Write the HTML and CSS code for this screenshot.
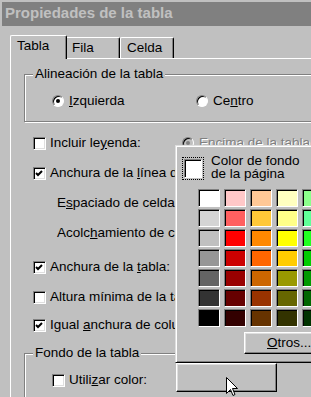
FILE: index.html
```html
<!DOCTYPE html>
<html lang="es">
  <head>
    <meta charset="UTF-8" />
    <title>Propiedades de la tabla</title>
    <link rel="stylesheet" href="styles.css">
  </head>
  <body>
    <div class="window">
      <div class="titlebar">Propiedades de la tabla</div>

      <div class="tabs">
        <div class="tab active">Tabla</div>
        <div class="tab fila">Fila</div>
        <div class="tab celda">Celda</div>
      </div>

      <div class="panel">
        <fieldset class="group">
          <legend>Alineación de la tabla</legend>
          <div class="group-body radios">
            <label class="radio first"><span class="dot on"></span><span><u>I</u>zquierda</span></label>
            <label class="radio"><span class="dot"></span><span>Ce<u>n</u>tro</span></label>
          </div>
        </fieldset>

        <div class="row first-row">
          <label class="check wide"><span class="box"></span><span>Incluir le<u>y</u>enda:</span></label>
          <label class="radio disabled"><span class="dot on"></span><span>Encima de la tabla</span></label>
        </div>
        <div class="row clip">
          <label class="check"><span class="box"><svg viewBox="0 0 11 11"><polyline points="2,5 4,7 8,3" /></svg></span><span>Anchura de la <u>l</u>ínea de borde:</span></label>
        </div>
        <div class="row clip indent"><span>E<u>s</u>paciado de celdas:</span></div>
        <div class="row clip indent"><span>Acolc<u>h</u>amiento de celdas:</span></div>
        <div class="row clip loose">
          <label class="check"><span class="box"><svg viewBox="0 0 11 11"><polyline points="2,5 4,7 8,3" /></svg></span><span>Anchura de la <u>t</u>abla:</span></label>
        </div>
        <div class="row clip">
          <label class="check"><span class="box"></span><span>Altura mínima de la tabla:</span></label>
        </div>
        <div class="row clip tight">
          <label class="check"><span class="box"><svg viewBox="0 0 11 11"><polyline points="2,5 4,7 8,3" /></svg></span><span>Igual <u>a</u>nchura de columnas</span></label>
        </div>

        <fieldset class="group fondo">
          <legend>Fondo de la tabla</legend>
          <div class="group-body color-row">
            <label class="check color-check"><span class="box"></span><span>Utili<u>z</u>ar color:</span></label>
            <div class="dropdown"></div>
          </div>
        </fieldset>
      </div>

      <!-- color picker dropped down over the dialog -->
      <div class="popup">
        <div class="current">
          <span class="focus"><span class="swatch"></span></span>
          <span class="current-label">Color de fondo<br>de la página</span>
        </div>
        <div class="palette">
          <span style="background:#ffffff"></span><span style="background:#ffc8c8"></span><span style="background:#ffc896"></span><span style="background:#ffffc0"></span><span style="background:#8cff8c"></span><span style="background:#c0ffff"></span><span style="background:#c0c0ff"></span><span style="background:#ffc0ff"></span>
          <span style="background:#d4d4d4"></span><span style="background:#ff6060"></span><span style="background:#ffc838"></span><span style="background:#ffff88"></span><span style="background:#60ff98"></span><span style="background:#60ffff"></span><span style="background:#6060ff"></span><span style="background:#ff60ff"></span>
          <span style="background:#c0c0c0"></span><span style="background:#ff0000"></span><span style="background:#ff8800"></span><span style="background:#ffff00"></span><span style="background:#20ff20"></span><span style="background:#00ffff"></span><span style="background:#0000ff"></span><span style="background:#ff00ff"></span>
          <span style="background:#969696"></span><span style="background:#cc0000"></span><span style="background:#ff6600"></span><span style="background:#ffcc00"></span><span style="background:#00cc00"></span><span style="background:#00cccc"></span><span style="background:#0000cc"></span><span style="background:#cc00cc"></span>
          <span style="background:#646464"></span><span style="background:#990000"></span><span style="background:#cc6600"></span><span style="background:#999900"></span><span style="background:#009900"></span><span style="background:#009999"></span><span style="background:#000099"></span><span style="background:#990099"></span>
          <span style="background:#333333"></span><span style="background:#660000"></span><span style="background:#993300"></span><span style="background:#666600"></span><span style="background:#006600"></span><span style="background:#006666"></span><span style="background:#000066"></span><span style="background:#660066"></span>
          <span style="background:#000000"></span><span style="background:#330000"></span><span style="background:#663300"></span><span style="background:#333300"></span><span style="background:#003300"></span><span style="background:#003333"></span><span style="background:#000033"></span><span style="background:#330033"></span>
        </div>
        <div class="more"><u>O</u>tros...</div>
      </div>

      <svg class="cursor" width="13" height="20" viewBox="0 0 13 20">
        <path d="M0.5 0.5 V16.5 L4.5 12.5 L7 18.5 L9 17.5 L6.5 11.5 H11.5 Z" />
      </svg>
    </div>
  </body>
</html>
```

FILE: styles.css
```css
body {
  margin: 0;
  background-color: #c0c0c0;
  font-family: "Liberation Sans", Arial, sans-serif;
  font-size: 13.5px;
  line-height: 16px;
  color: #000;
  overflow: hidden;
}

.window {
  position: relative;
  width: 430px;
  height: 397px;
  padding-top: 2px;
  box-sizing: border-box;
}

.titlebar {
  margin-left: 2px;
  height: 24px;
  line-height: 22px;
  padding-left: 3px;
  background-color: #808080;
  color: #c0c0c0;
  font-size: 15px;
  font-weight: bold;
}

/* Tabs */
.tabs {
  display: flex;
  align-items: flex-end;
  height: 32px;
  padding-left: 10px;
  position: relative;
  z-index: 1;
}

.tab {
  height: 21px;
  box-sizing: border-box;
  padding: 2px 0 0 6px;
  border: 1px solid;
  border-color: #fff #000 transparent #fff;
  border-bottom: none;
  border-radius: 2px 2px 0 0;
  box-shadow: inset -1px 0 #808080;
  background-color: #c0c0c0;
}

.tab.active {
  width: 57px;
  height: 24px;
  margin-bottom: -1px;
  padding-top: 2px;
  position: relative;
  z-index: 2;
}

.tab.fila {
  width: 55px;
  margin-left: -2px;
}

.tab.celda {
  width: 54px;
}

.panel {
  margin-left: 10px;
  height: 340px;
  border-top: 1px solid #fff;
  border-left: 1px solid #fff;
}

/* Group boxes */
.group {
  margin: 7px 12px 0 13px;
  padding: 11px 0 12px 0;
  border: 1px solid #808080;
  box-shadow: inset 1px 1px #fff, 1px 1px #fff;
  min-width: 0;
}

.group legend {
  margin-left: 8px;
  padding: 0 2px;
  background-color: #c0c0c0;
  line-height: 16px;
}

.group-body {
  padding-left: 27px;
}

.radios {
  display: flex;
}

.fondo {
  margin-top: 5px;
  padding-top: 2px;
}

.color-row {
  display: flex;
  align-items: flex-start;
}

.color-check {
  width: 124px;
  margin-top: 9px;
}

.dropdown {
  width: 101px;
  height: 29px;
  box-sizing: border-box;
  border: 1px solid;
  border-color: #fff #000 #000 #fff;
  box-shadow: inset -1px -1px #808080, inset 1px 1px #dfdfdf;
}

/* Rows of options */
.row {
  display: flex;
  align-items: center;
  height: 30px;
  padding-left: 22px;
  white-space: nowrap;
}

/* rows that run in under the colour picker end at its edge */
.row.clip {
  width: 164px;
  box-sizing: border-box;
  overflow: hidden;
}

.row.first-row {
  margin-top: 6px;
}

.row.indent {
  padding-left: 46px;
}

.row.loose {
  margin-top: 4px;
}

.row.tight {
  margin-top: -2px;
}

.check,
.radio {
  display: flex;
  align-items: center;
  white-space: nowrap;
}

.check.wide {
  width: 149px;
}

.radio.first {
  width: 144px;
}

.box {
  flex: none;
  width: 13px;
  height: 13px;
  box-sizing: border-box;
  margin-right: 4px;
  border: 1px solid;
  border-color: #808080 #fff #fff #808080;
  box-shadow: inset 1px 1px #000, inset -1px -1px #dfdfdf;
  background-color: #fff;
}

.box svg {
  display: block;
  width: 11px;
  height: 11px;
  fill: none;
  stroke: #000;
  stroke-width: 2;
}

.dot {
  flex: none;
  position: relative;
  width: 12px;
  height: 12px;
  box-sizing: border-box;
  margin-right: 5px;
  border-radius: 50%;
  border: 1px solid;
  border-color: #808080 #fff #fff #808080;
  box-shadow: inset 1px 1px #000;
  background-color: #fff;
}

.dot.on::after {
  content: "";
  position: absolute;
  left: 3px;
  top: 3px;
  width: 4px;
  height: 4px;
  border-radius: 50%;
  background-color: #000;
}

.radio.disabled {
  color: #808080;
  text-shadow: 1px 1px #fff;
}

.radio.disabled .dot {
  background-color: #c0c0c0;
}

.radio.disabled .dot::after {
  background-color: #808080;
}

/* Color picker */
.popup {
  position: absolute;
  left: 175px;
  top: 145px;
  width: 170px;
  height: 218px;
  box-sizing: border-box;
  padding: 8px 0 0 6px;
  border: 1px solid;
  border-color: #dfdfdf #000 #000 #dfdfdf;
  box-shadow: inset 1px 1px #fff, inset -1px -1px #808080;
  background-color: #c0c0c0;
  z-index: 5;
}

.current {
  display: flex;
  gap: 7px;
}

.focus {
  width: 22px;
  height: 23px;
  box-sizing: border-box;
  margin-top: 3px;
  padding: 1px;
  border: 1px dotted #000;
}

.swatch {
  display: block;
  height: 100%;
  box-sizing: border-box;
  border: 1px solid;
  border-color: #808080 #fff #fff #808080;
  box-shadow: inset 1px 1px #000;
  background-color: #fff;
}

.current-label {
  line-height: 13px;
}

.palette {
  display: grid;
  grid-template-columns: repeat(8, 22px);
  grid-auto-rows: 18px;
  column-gap: 4px;
  row-gap: 2px;
  margin: 9px 0 0 16px;
}

.palette span {
  box-sizing: border-box;
  border: 1px solid;
  border-color: #808080 #fff #fff #808080;
  box-shadow: inset 1px 1px #000;
}

.more {
  width: 100px;
  height: 22px;
  box-sizing: border-box;
  margin: 5px 0 0 62px;
  padding-left: 22px;
  line-height: 20px;
  border: 1px solid;
  border-color: #fff #000 #000 #fff;
  box-shadow: inset -1px -1px #808080, inset 1px 1px #dfdfdf;
}

.cursor {
  position: absolute;
  left: 226px;
  top: 377px;
  z-index: 10;
}

.cursor path {
  fill: #fff;
  stroke: #000;
  stroke-width: 1;
}
```
